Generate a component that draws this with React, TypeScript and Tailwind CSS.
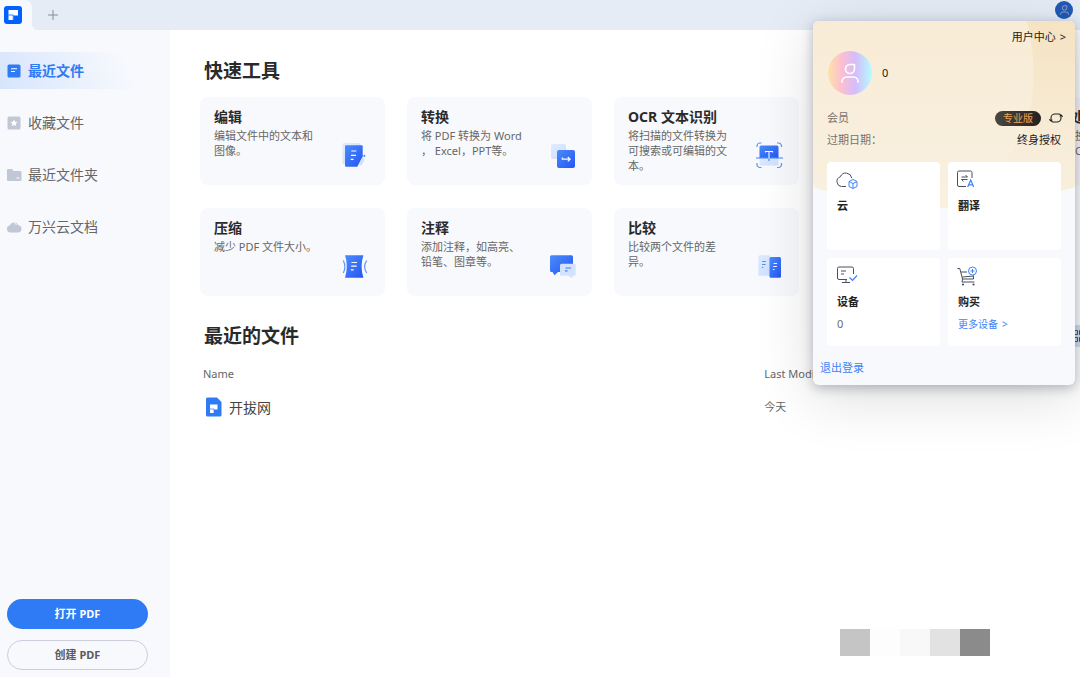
import type { ReactNode } from 'react'
import { clsx } from 'clsx'

/* ── Tool icons ── */
function Defs() {
  return (
    <svg className="absolute size-0" aria-hidden="true">
      <defs>
        <linearGradient id="blue" x1="0" y1="0" x2="1" y2="1">
          <stop offset="0" stopColor="#4a8cf9" />
          <stop offset="1" stopColor="#2655f5" />
        </linearGradient>
        <linearGradient id="pale" x1="0" y1="0" x2="1" y2="1">
          <stop offset="0" stopColor="#dfebff" />
          <stop offset="1" stopColor="#cddfff" />
        </linearGradient>
      </defs>
    </svg>
  )
}

function ToolIcon({ children }: { children: ReactNode }) {
  return (
    <svg viewBox="0 0 28 28" className="size-7 shrink-0 self-end" fill="none" aria-hidden="true">
      {children}
    </svg>
  )
}

const editIcon = (
  <ToolIcon>
    <rect x="1.5" y="2" width="18" height="21" rx="1.5" fill="url(#pale)" />
    <path d="M5 4.3h15.7a1 1 0 0 1 1 1v10.5l-5.4 9.9H5a1 1 0 0 1-1-1V5.3a1 1 0 0 1 1-1z" fill="url(#blue)" />
    <path d="M22.5 17.5 19 24" stroke="#d3e2ff" strokeWidth="3.2" />
    <circle cx="23.3" cy="14.8" r="1.1" fill="#4a8cf9" />
    <path d="M10.3 10h5M10 14.3h5M9.7 18.3h2.8" stroke="#fff" strokeWidth="1.2" />
  </ToolIcon>
)

const convertIcon = (
  <ToolIcon>
    <rect x="3" y="3" width="15" height="15" rx="2" fill="url(#pale)" />
    <rect x="9" y="9" width="18" height="18" rx="2" fill="url(#blue)" />
    <path d="M14.3 16.5v1.700h7.700M19.800 16l2.300 2.200-2.300 2.200" stroke="#fff" strokeWidth="1.2" />
  </ToolIcon>
)

const ocrIcon = (
  <ToolIcon>
    <path d="M4.5 17h19v6a1.500 1.500 0 0 1-1.500 1.500H6A1.500 1.500 0 0 1 4.500 23z" fill="url(#pale)" />
    <path d="M6 4.500h16A1.500 1.500 0 0 1 23.500 6v11h-19V6A1.500 1.500 0 0 1 6 4.500z" fill="url(#blue)" />
    <path d="M1 17h27" stroke="#4a8cf9" strokeWidth="1.1" />
    <path d="M10.500 11.500v-1h7v1M14 10.500V17" stroke="#fff" strokeWidth="1.1" />
    <path d="M14 18v2" stroke="#4a8cf9" strokeWidth="1.2" />
    <path
      d="M2 6V5a3 3 0 0 1 3-3h1.500M22 2h1.500a3 3 0 0 1 3 3v1M26.500 22v1.500a3 3 0 0 1-3 3H22M6.500 26.500H5a3 3 0 0 1-3-3V22"
      stroke="#5c95fa"
      strokeWidth="1.2"
    />
  </ToolIcon>
)

const compressIcon = (
  <ToolIcon>
    <path d="M4 3.300h18.400c-2.400 7.300-2.400 15 0 22.400H4c2.400-7.400 2.400-15.100 0-22.400z" fill="url(#blue)" />
    <path d="M2.300 8.500c2 4 2 8.500 0 12.500M25.700 8.500c-2.600 4-2.600 8.500 0 12.500" stroke="#5c95fa" strokeWidth="1.2" />
    <path d="M10.500 10.500h5.500M10.200 14.200h5.500M9.900 17.800h2.800" stroke="#fff" strokeWidth="1.2" />
  </ToolIcon>
)

const commentIcon = (
  <ToolIcon>
    <path d="M3.500 3.300h20A1.500 1.500 0 0 1 25 4.800v13.700a1.500 1.500 0 0 1-1.500 1.500H10l-3.500 3.200L4.500 20h-1A1.500 1.500 0 0 1 2 18.500V4.800a1.500 1.500 0 0 1 1.500-1.500z" fill="url(#blue)" />
    <path d="M13.500 11.700h12.700a1.500 1.500 0 0 1 1.500 1.500v9a1.500 1.500 0 0 1-1.500 1.500h-.7L23.300 26l-2.500-2.300h-7.300a1.500 1.500 0 0 1-1.500-1.500v-9a1.500 1.500 0 0 1 1.500-1.500z" fill="#d3e2ff" />
    <path d="M17.500 16h5.500M17 18.800h2.500" stroke="#3f7df8" strokeWidth="1.2" />
  </ToolIcon>
)

const compareIcon = (
  <ToolIcon>
    <rect x="3.3" y="3.3" width="12" height="20.5" rx="1.5" fill="url(#pale)" />
    <rect x="14.5" y="5" width="11.5" height="20.7" rx="1.5" fill="url(#blue)" />
    <path d="M7.300 9.500h3.500M7 12.500h3.500M6.800 15.500h1.500" stroke="#4a8cf9" strokeWidth="1.1" />
    <path d="M18.600 11.500h3.500M18.300 14.500h3.500M18 17.500h1.500" stroke="#fff" strokeWidth="1.1" />
  </ToolIcon>
)

const tools = [
  { title: '编辑', desc: '编辑文件中的文本和\n图像。', icon: editIcon },
  { title: '转换', desc: '将 PDF 转换为 Word\n， Excel，PPT等。', icon: convertIcon },
  { title: 'OCR 文本识别', desc: '将扫描的文件转换为\n可搜索或可编辑的文\n本。', icon: ocrIcon },
  { title: '批量处理', desc: '批量转换、\n提取、OCR', icon: null, last: true },
  { title: '压缩', desc: '减少 PDF 文件大小。', icon: compressIcon },
  { title: '注释', desc: '添加注释，如高亮、\n铅笔、图章等。', icon: commentIcon },
  { title: '比较', desc: '比较两个文件的差\n异。', icon: compareIcon },
]

/* ── Sidebar ── */
const navItems = [
  {
    label: '最近文件',
    active: true,
    icon: (
      <>
        <rect x="0.5" y="0.5" width="13" height="13" rx="1.5" fill="#2f7af5" />
        <path d="M4 4.800h6M4 7.500h4" stroke="#fff" strokeWidth="1.1" />
      </>
    ),
  },
  {
    label: '收藏文件',
    icon: (
      <>
        <rect x="0.5" y="0.5" width="13" height="13" rx="1.5" fill="#c2c7d8" />
        <path d="m7 3.500 1.100 2.200 2.400.3-1.800 1.700.5 2.400L7 8.900l-2.200 1.200.5-2.400L3.500 6l2.400-.3z" fill="#fff" />
      </>
    ),
  },
  {
    label: '最近文件夹',
    icon: (
      <>
        <path d="M0 2a1 1 0 0 1 1-1h4l1.500 2H13a1.500 1.500 0 0 1 1.500 1.500v7A1.500 1.500 0 0 1 13 13H1a1 1 0 0 1-1-1z" fill="#c2c7d8" />
        <path d="M9.500 10h3" stroke="#fff" />
      </>
    ),
  },
  {
    label: '万兴云文档',
    icon: (
      <>
        <path d="M3.500 12.500a3.600 3.600 0 0 1-.8-7.100 4.800 4.800 0 0 1 8.800-.2 3.700 3.700 0 0 1-.3 7.300z" fill="#c2c7d8" />
        <path d="M7.500 3.200a3 3 0 0 1 2 1.800" stroke="#fff" strokeWidth="0.8" />
      </>
    ),
  },
]

function Sidebar() {
  return (
    <aside className="flex w-[170px] shrink-0 flex-col bg-[#f8f9fd]">
      <nav className="mt-[22px] flex flex-col gap-[15px]">
        {navItems.map((item) => (
          <a
            key={item.label}
            href="#"
            className={clsx(
              'flex h-[37px] items-center gap-[7px] pl-[7px] text-[14px]',
              item.active
                ? 'bg-[linear-gradient(65deg,#d6e5fc,#f8f9fd_75%)] font-bold text-[#2f7af5]'
                : 'text-[#666]',
            )}
          >
            <svg viewBox="0 0 14 14" className="size-[14px] overflow-visible" fill="none" aria-hidden="true">
              {item.icon}
            </svg>
            {item.label}
          </a>
        ))}
      </nav>
      <div className="mt-auto flex flex-col gap-[11px] pr-[22px] pb-[7px] pl-[7px] text-[11px] font-bold">
        <button className="h-[30px] rounded-full bg-[#2f7af5] text-white">打开 PDF</button>
        <button className="h-[30px] rounded-full border border-[#cbcddc] text-[#5a5a5a]">创建 PDF</button>
      </div>
    </aside>
  )
}

function PersonPath() {
  return (
    <>
      <path d="M9 1.500h4.500V6A4.500 4.500 0 1 1 9 1.500z" />
      <path d="M1 19.500v-1A4.500 4.500 0 0 1 5.500 14h7a4.500 4.500 0 0 1 4.500 4.500v1" />
    </>
  )
}

/* ── Tab bar ── */
function TabBar() {
  return (
    <header className="flex h-[30px] shrink-0 bg-[#e5ecf6]">
      <div className="flex w-8 items-center rounded-tr-lg bg-[#f8f9fd] pl-1">
        <button aria-label="主页">
          <svg viewBox="0 0 18 18" className="size-[18px]" aria-hidden="true">
            <rect width="18" height="18" rx="3" fill="#0061ff" />
            <path d="M4.500 4H14v5.500H9.500V14h-5z" fill="#fff" />
            <path d="M4.500 9h4.800M9.200 9v5" stroke="#0061ff" strokeWidth="0.8" />
          </svg>
        </button>
      </div>
      <div className="size-[6px] self-end bg-[#f8f9fd]">
        <div className="size-full rounded-bl-md bg-[#e5ecf6]" />
      </div>
      <button className="ml-[10px] self-center" aria-label="新建标签页">
        <svg viewBox="0 0 10 10" className="size-[10px]" stroke="#858d9b" strokeWidth="1" aria-hidden="true">
          <path d="M5 0v10M0 5h10" />
        </svg>
      </button>
      <button
        className="mt-px mr-[7px] ml-auto flex size-[18px] items-center justify-center rounded-full bg-[#2159b5]"
        aria-label="账户"
      >
        <svg viewBox="0 0 18 20" className="h-[10px] w-[9px]" fill="none" stroke="#8f9fc0" strokeWidth="2" aria-hidden="true">
          <PersonPath />
        </svg>
      </button>
    </header>
  )
}

/* ── Account popup ── */
const services = [
  {
    title: '云',
    icon: (
      <>
        <path d="M11 16.500H6.500a5 5 0 0 1-1.200-9.700 6 6 0 0 1 11.500 1.400" stroke="#4b4f5c" />
        <path d="m18 9.500 4 2v5l-4 2-4-2v-5zM14 11.500l4 2 4-2M18 13.500v5" stroke="#3f83f8" />
      </>
    ),
  },
  {
    title: '翻译',
    icon: (
      <>
        <path d="M10 16.500H3A1.500 1.500 0 0 1 1.500 15V2.500A1.500 1.500 0 0 1 3 1h11.500A1.500 1.500 0 0 1 16 2.500V8" stroke="#4b4f5c" />
        <path d="M5.500 7h6L9.500 5M11.500 9.500h-6l2 2" stroke="#4b4f5c" />
        <path d="m11.700 17 3-7 3 7M12.700 14.800h4" stroke="#3f83f8" strokeWidth="1.2" />
      </>
    ),
  },
  {
    title: '设备',
    note: <span className="text-[11px] text-[#6b6b6b]">0</span>,
    icon: (
      <>
        <path d="M12 13.500H4A1.500 1.500 0 0 1 2.500 12V2.500A1.500 1.500 0 0 1 4 1h13a1.500 1.500 0 0 1 1.500 1.500V8M6 5h5M6 8h3M11 13.500v3M7 16.500h8" stroke="#4b4f5c" />
        <path d="m14.500 11.500 3 2.800L22 9.500" stroke="#3f83f8" strokeWidth="1.2" />
      </>
    ),
  },
  {
    title: '购买',
    note: (
      <a href="#" className="flex gap-1 text-[10px] text-[#3f83f8]">
        更多设备 <span>&gt;</span>
      </a>
    ),
    icon: (
      <>
        <path d="M1.300 2.500h2.500L6.500 13H17.500V9.500M5 6h6M6.300 11l11.200-1M6.500 13l-.5 3h12.500" stroke="#4b4f5c" />
        <circle cx="7" cy="18.500" r="1.100" fill="#4b4f5c" />
        <circle cx="17.500" cy="18.500" r="1.100" fill="#4b4f5c" />
        <circle cx="16.500" cy="5" r="4" fill="#fff" stroke="#3f83f8" />
        <path d="M16.500 3v4M14.500 5h4" stroke="#3f83f8" />
      </>
    ),
  },
]

function AccountPopup() {
  return (
    <section className="absolute top-[21px] right-[5px] w-[262px] overflow-hidden rounded-md bg-[#f8f9fd] text-[11px] text-[#222] shadow-[0_3px_12px_rgba(60,65,90,0.35),0_12px_60px_rgba(0,0,0,0.14)]">
      <svg viewBox="0 0 262 187" className="absolute inset-x-0 top-0 w-full" aria-hidden="true">
        <defs>
          <linearGradient id="sand" x1="0" y1="0" x2="0" y2="1">
            <stop offset="0" stopColor="#f8ecd6" />
            <stop offset="1" stopColor="#f9f0e0" />
          </linearGradient>
          <linearGradient id="sandDark" x1="0" y1="0" x2="0" y2="1">
            <stop offset="0" stopColor="#f5e3c2" />
            <stop offset="0.8" stopColor="#f8eedc" />
          </linearGradient>
        </defs>
        <path d="M0 0h262v166Q131 208 0 166z" fill="url(#sand)" />
        <path d="M214 0c12 52 10 102-24 142v40l72-16V0z" fill="url(#sandDark)" />
      </svg>
      <div className="relative pt-[6px] pb-[7px]">
        <div className="flex h-5 items-center justify-end pr-[9px]">
          <a href="#" className="flex gap-1">
            用户中心 <span>&gt;</span>
          </a>
        </div>
        <div className="mt-1 flex items-center gap-[10px] pl-[15px]">
          <div className="flex size-11 items-center justify-center rounded-full bg-[linear-gradient(90deg,#fde2a9,#fdbfd0_30%,#d5bcfb_62%,#b5fcff)]">
            <svg viewBox="0 0 18 20" className="h-5 w-[18px] overflow-visible" fill="none" stroke="#fff" strokeWidth="1.6" aria-hidden="true">
              <PersonPath />
            </svg>
          </div>
          <span>0</span>
        </div>
        <div className="mt-3 px-[14px]">
          <div className="-mr-[2px] flex h-[22px] items-center">
            <span className="text-[#77726a]">会员</span>
            <span className="ml-auto flex h-[15px] w-[46px] items-center justify-center rounded-full bg-gradient-to-r from-[#4a4641] to-[#24211f] text-[10px] text-[#e9a55c]">
              专业版
            </span>
            <button className="ml-2" aria-label="刷新">
              <svg viewBox="0 0 14 12" className="h-3 w-[14px] overflow-visible" fill="none" stroke="#222" strokeWidth="1.1" aria-hidden="true">
                <path d="M2 8.300V6a4 4 0 0 1 4-4h4a2 2 0 0 1 1.500.8M12 3.700V6a4 4 0 0 1-4 4H4a2 2 0 0 1-1.500-.8" />
                <path d="M.3 7.300 2 9l1.300-1.300M13.700 4.700 12 3l-1.300 1.300" />
              </svg>
            </button>
          </div>
          <div className="flex h-[22px] items-center justify-between">
            <span className="text-[#77726a]">过期日期：</span>
            <span>终身授权</span>
          </div>
          <div className="mt-[11px] grid grid-cols-2 gap-2">
            {services.map((service) => (
              <div key={service.title} className="h-[88px] rounded bg-white pt-2 pl-2">
                <svg viewBox="0 0 24 22" className="h-[22px] w-6" fill="none" aria-hidden="true">
                  {service.icon}
                </svg>
                <h3 className="mt-1 pl-[2px] leading-5 font-bold">{service.title}</h3>
                <div className="mt-[3px] pl-[2px] leading-[18px]">{service.note}</div>
              </div>
            ))}
          </div>
        </div>
        <button className="mt-3 ml-[7px] block leading-5 text-[#3f83f8]">退出登录</button>
      </div>
    </section>
  )
}

export default function App() {
  return (
    <div className="relative flex h-screen flex-col overflow-hidden bg-white font-['Noto_Sans','Noto_Sans_CJK_SC',sans-serif]">
      <Defs />
      <TabBar />
      <div className="flex min-h-0 flex-1">
        <Sidebar />
        <main className="flex min-w-0 flex-1 flex-col overflow-hidden pt-[26px] pl-[30px]">
          <h2 className="pl-1 text-[19px] leading-[30px] font-bold text-[#2a2a2a]">快速工具</h2>
          <div className="mt-[11px] grid grid-cols-[repeat(5,185px)] gap-x-[22px] gap-y-[23px]">
            {tools.map((tool) => (
              <button
                key={tool.title}
                className={clsx(
                  'flex h-[88px] items-start justify-between rounded-lg bg-[#f8f9fd] pt-[9px] pr-4 pb-4 pl-[14px] text-left',
                  tool.last && 'col-start-5',
                )}
              >
                <span className="whitespace-pre">
                  <span className="block text-[14px] leading-[22px] font-bold text-[#2a2a2a]">{tool.title}</span>
                  <span className="block text-[11px] leading-[15px] text-[#666]">{tool.desc}</span>
                </span>
                {tool.icon}
              </button>
            ))}
          </div>

          <div className="mt-[25px] flex items-center justify-between">
            <h2 className="pl-1 text-[19px] leading-[30px] font-bold text-[#2a2a2a]">最近的文件</h2>
            <button className="-mr-[11px] flex h-[22px] w-6 items-center justify-center bg-[#cfdff5]" aria-label="网格视图">
              <svg viewBox="0 0 14 14" className="size-[14px]" fill="none" stroke="#4b4f5c" aria-hidden="true">
                <path d="M1.500 1.500h4v4h-4zM7.500 1.500h4v4h-4zM1.500 8.500h4v4h-4zM7.500 8.500h4v4h-4z" />
              </svg>
            </button>
          </div>
          <table className="mt-3 ml-[3px] table-fixed text-left text-[11px] text-[#666]">
            <thead>
              <tr className="h-[22px]">
                <th className="w-[64%] font-normal">Name</th>
                <th className="font-normal">Last Modified</th>
              </tr>
            </thead>
            <tbody>
              <tr className="h-11">
                <td>
                  <a href="#" className="flex items-center gap-[7px] pl-[3px] text-[14px] text-[#444]">
                    <svg viewBox="0 0 16 20" className="h-5 w-4" aria-hidden="true">
                      <path d="M1.500.5h9.500L15.500 5v13a1.500 1.500 0 0 1-1.500 1.500H1.500A1.500 1.500 0 0 1 0 18V2A1.500 1.500 0 0 1 1.500.5z" fill="#2f7af5" />
                      <path d="M4 7.500h7.500v5H8V16H4z" fill="#fff" />
                      <path d="M4 12h4.200M8 12v4" stroke="#2f7af5" strokeWidth="0.7" />
                    </svg>
                    开拔网
                  </a>
                </td>
                <td>今天</td>
              </tr>
            </tbody>
          </table>

          <div className="mt-auto mr-[90px] mb-[21px] flex h-[27px] w-[150px] self-end">
            <div className="flex-1 bg-[#c5c5c5]" />
            <div className="flex-1 bg-[#fdfdfd]" />
            <div className="flex-1 bg-[#f8f8f8]" />
            <div className="flex-1 bg-[#e2e2e2]" />
            <div className="flex-1 bg-[#8b8b8b]" />
          </div>
        </main>
      </div>
      <AccountPopup />
    </div>
  )
}
